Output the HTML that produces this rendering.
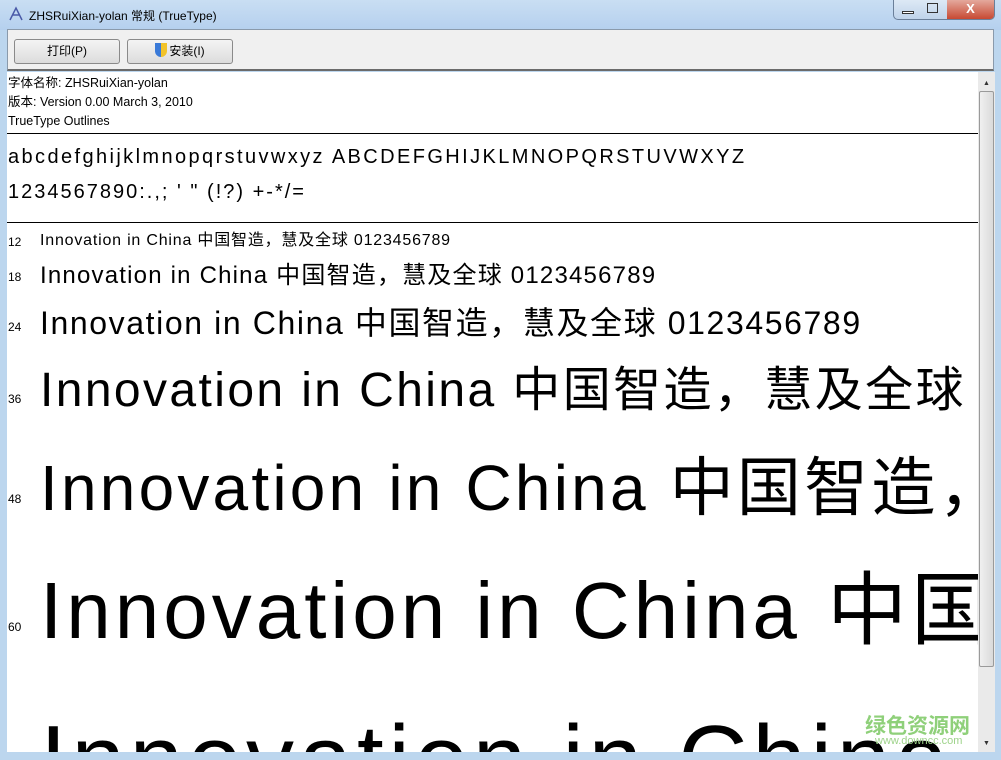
<!DOCTYPE html>
<html><head><meta charset="utf-8"><style>
*{margin:0;padding:0;box-sizing:border-box}
body{width:1001px;height:760px;overflow:hidden;background:#bcd6ee;font-family:"Liberation Sans","Noto Sans CJK SC",sans-serif;position:relative}
.title{position:absolute;left:0;top:0;width:1001px;height:30px;background:linear-gradient(#c9def3,#b5d0ee);}
.title span{position:absolute;left:29px;top:7px;font-size:12px;color:#000}
.btns{position:absolute;right:6px;top:0;width:102px;height:20px;border:1px solid #6a7f99;border-top:none;border-radius:0 0 5px 5px;background:linear-gradient(#dde9f5,#bfd3ea);overflow:hidden}
.btns .cl{position:absolute;right:0;top:0;width:47px;height:20px;background:linear-gradient(#e4a99d,#c6442d);color:#fff;font-size:13px;text-align:center;line-height:18px;font-weight:bold}
.tb{position:absolute;left:7px;top:29px;width:987px;height:42px;background:#f0f0f0;border:1px solid #8a9aab;border-bottom:2px solid #6b6b6b}
.b{position:absolute;top:9px;height:25px;width:106px;border:1px solid #8a8a8a;border-radius:3px;background:linear-gradient(#f4f4f4,#dcdcdc);font-size:12px;text-align:center;line-height:23px}
.content{position:absolute;left:7px;top:72px;width:971px;height:680px;background:#fff;overflow:hidden}
.sb{position:absolute;left:978px;top:72px;width:17px;height:680px;background:#eaeaea}
.thumb{position:absolute;left:1px;top:19px;width:15px;height:576px;border:1px solid #9a9a9a;border-radius:2px;background:linear-gradient(90deg,#f0f0f0,#dadada)}
.info{position:absolute;left:1px;font-size:12.5px;line-height:15px;color:#000}
.hr{position:absolute;left:0;width:971px;height:1px;background:#000}
.l{position:absolute;white-space:nowrap;line-height:1;letter-spacing:0.05em}
.n{position:absolute;left:1px;font-size:12px}
.bot{position:absolute;left:0;top:752px;width:1001px;height:8px;background:#bcd6ee}
</style></head><body>
<div class="title"><svg style="position:absolute;left:8px;top:6px" width="16" height="16"><path d="M2 14 L8 2 L14 14 M5 9 H12" stroke="#4a5aa8" stroke-width="1.5" fill="none"/></svg><span>ZHSRuiXian-yolan 常规 (TrueType)</span></div>
<div class="btns"><span style="position:absolute;left:8px;top:11px;width:12px;height:3px;border:1px solid #333;background:#fff"></span><span style="position:absolute;left:33px;top:3px;width:11px;height:10px;border:1px solid #333"></span><div class="cl">X</div></div>
<div class="tb">
<div class="b" style="left:6px">打印(P)</div>
<div class="b" style="left:119px"><span style="display:inline-block;width:12px;height:14px;vertical-align:-2px;background:linear-gradient(90deg,#3a7ad8 50%,#f2c32a 50%);border-radius:0 0 6px 6px;margin-right:2px"></span>安装(I)</div>
</div>
<div class="content">
<div class="info" style="top:4px">字体名称: ZHSRuiXian-yolan</div>
<div class="info" style="top:23px">版本: Version 0.00 March 3, 2010</div>
<div class="info" style="top:42px">TrueType Outlines</div>
<div class="hr" style="top:61px"></div>
<div class="l" style="left:1px;top:75px;font-size:20px;letter-spacing:0.12em">abcdefghijklmnopqrstuvwxyz ABCDEFGHIJKLMNOPQRSTUVWXYZ</div>
<div class="l" style="left:1px;top:110px;font-size:20px;letter-spacing:0.1em">1234567890:.,; ' " (!?) +-*/=</div>
<div class="hr" style="top:150px"></div>
<div class="n" style="top:163px">12</div><div class="l" style="left:33px;top:161px;font-size:16px">Innovation in China 中国智造，慧及全球 0123456789</div>
<div class="n" style="top:198px">18</div><div class="l" style="left:33px;top:192px;font-size:24px">Innovation in China 中国智造，慧及全球 0123456789</div>
<div class="n" style="top:248px">24</div><div class="l" style="left:33px;top:235px;font-size:32px">Innovation in China 中国智造，慧及全球 0123456789</div>
<div class="n" style="top:320px">36</div><div class="l" style="left:33px;top:295px;font-size:48px">Innovation in China 中国智造，慧及全球 0123456789</div>
<div class="n" style="top:420px">48</div><div class="l" style="left:33px;top:384px;font-size:64px">Innovation in China 中国智造，慧及全球</div>
<div class="n" style="top:548px">60</div><div class="l" style="left:33px;top:499px;font-size:80px">Innovation in China 中国智造</div>
<div class="l" style="left:33px;top:640px;font-size:96px">Innovation in China 中国</div>
<div style="position:absolute;left:858px;top:638px;font-size:21px;color:#8fd07a;font-weight:bold">绿色资源网</div>
<div style="position:absolute;left:868px;top:663px;font-size:11px;color:#9ed38a">www.downcc.com</div>
</div>
<div class="sb"><div class="thumb"></div><div style="position:absolute;left:5px;top:8px;font-size:7px;color:#333">▲</div><div style="position:absolute;left:5px;top:668px;font-size:7px;color:#333">▼</div></div>
<div class="bot"></div>
</body></html>
